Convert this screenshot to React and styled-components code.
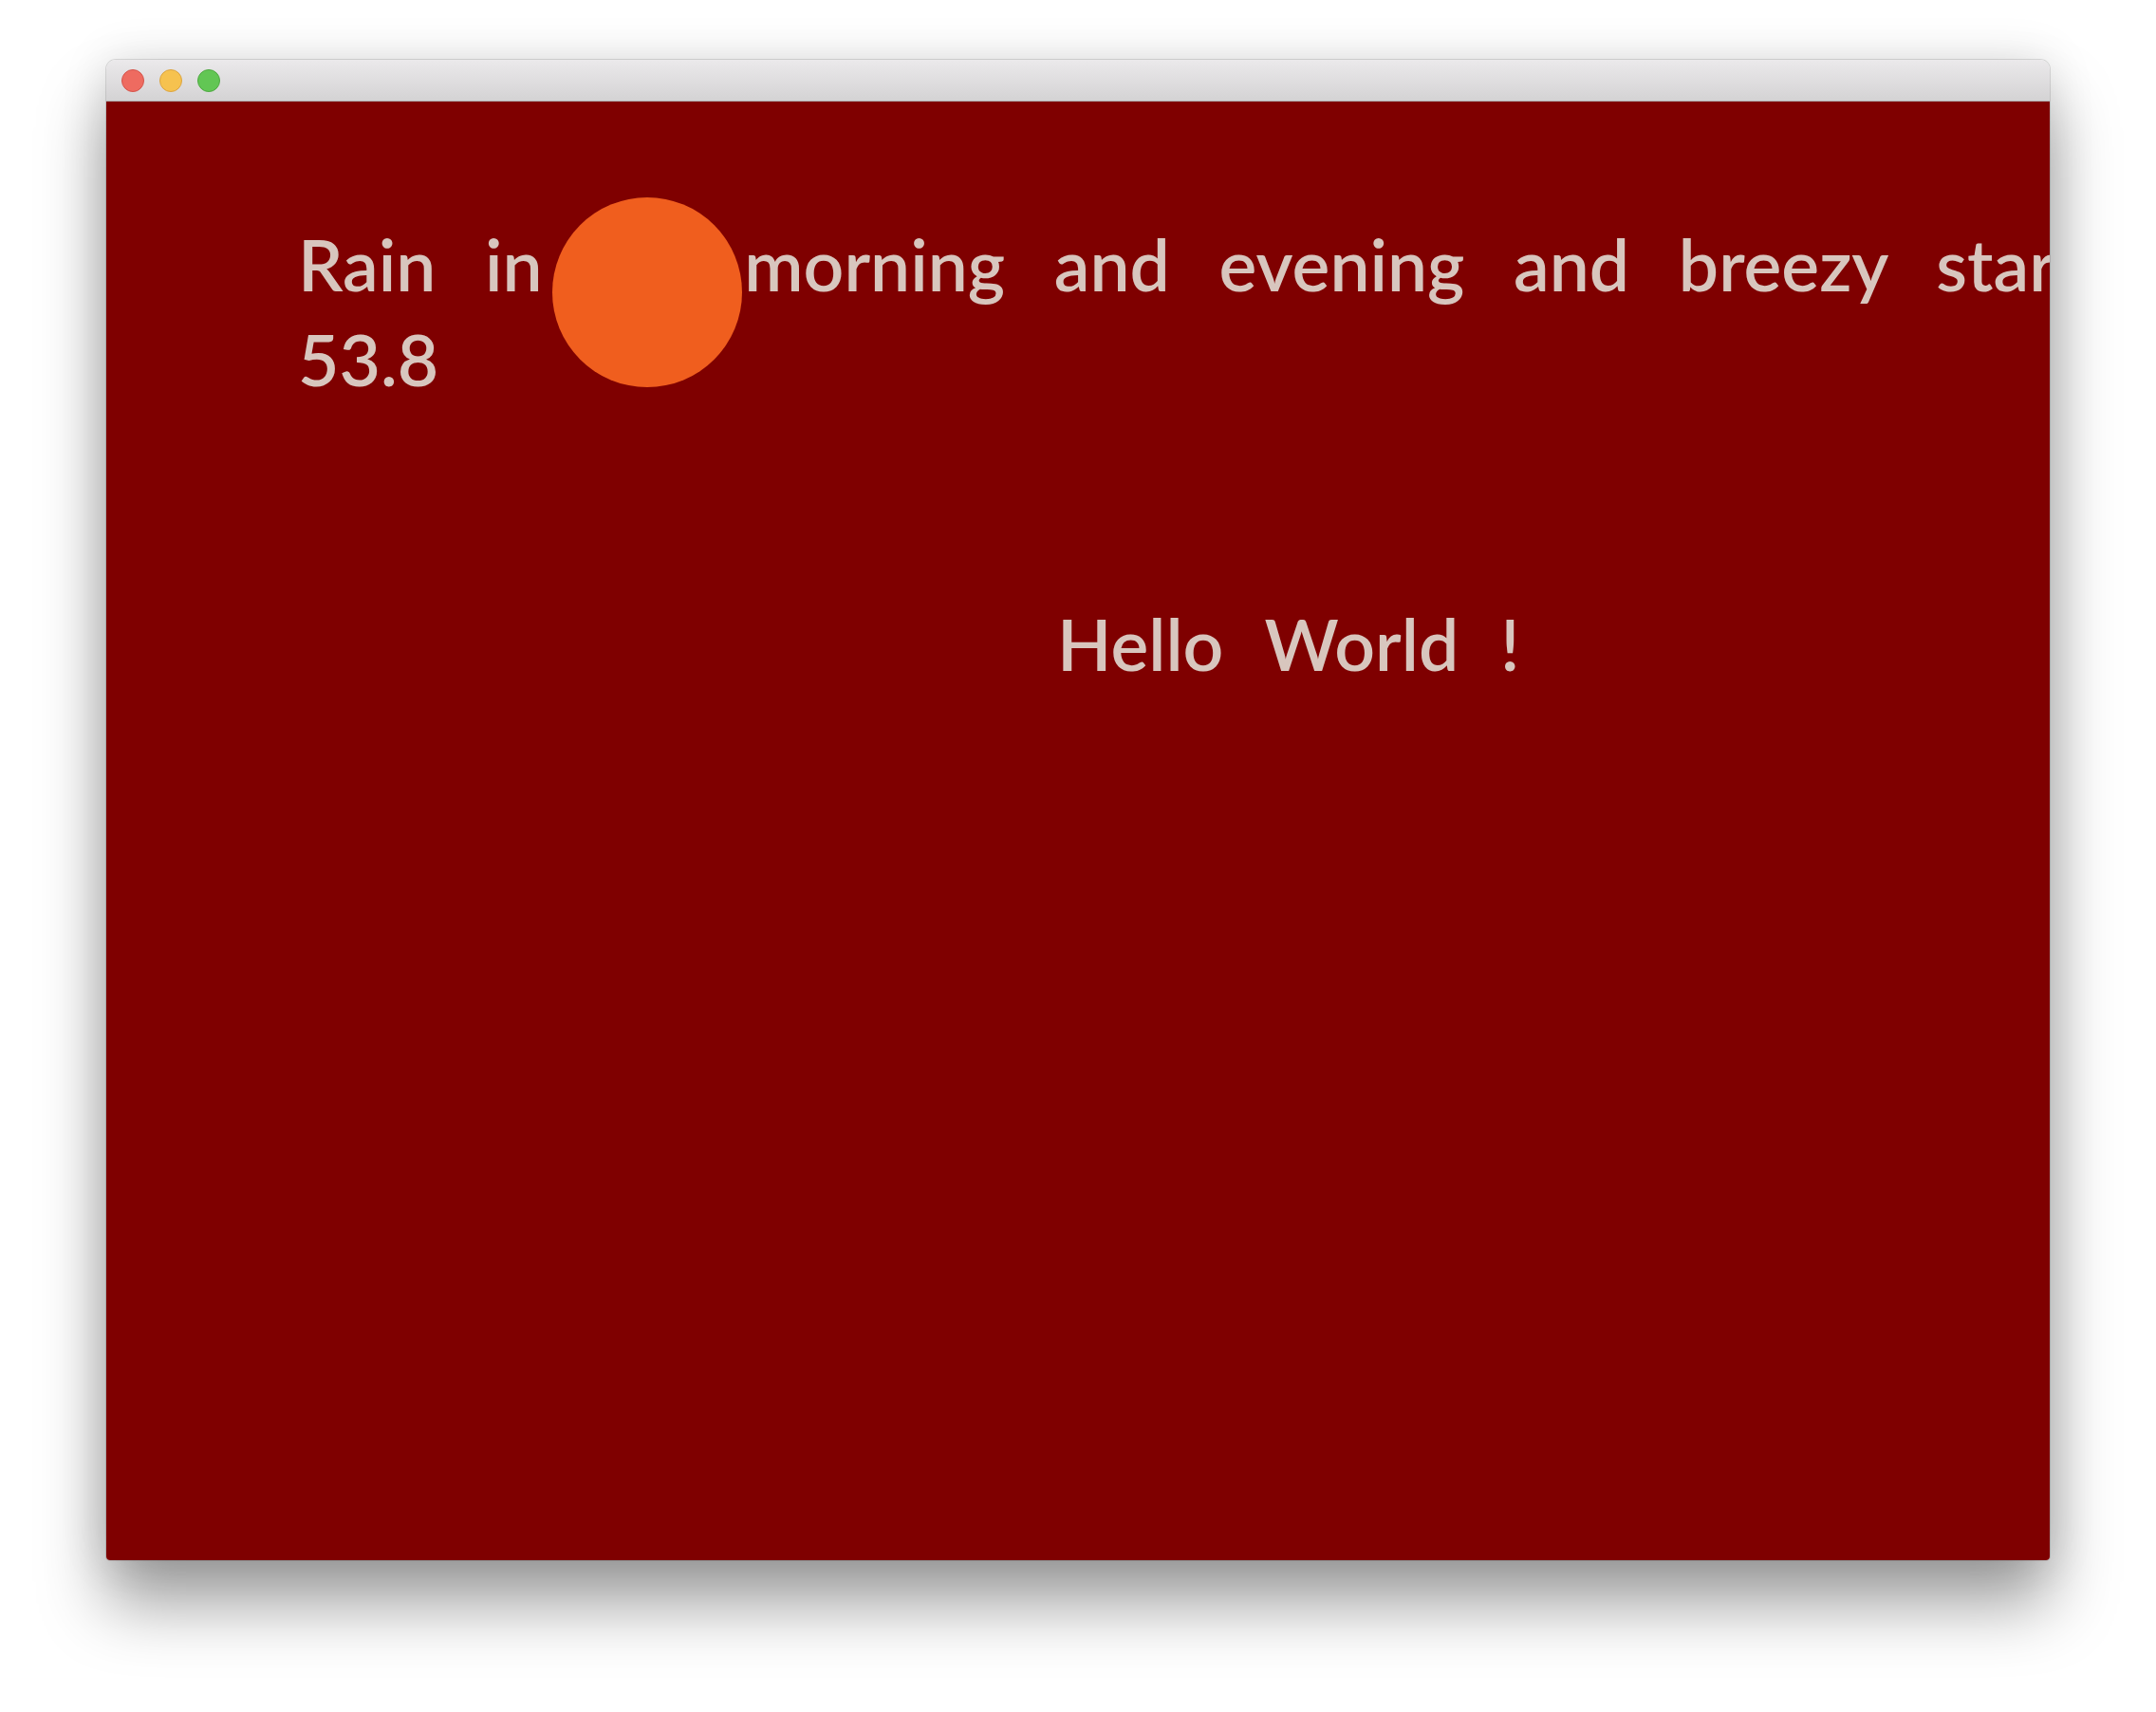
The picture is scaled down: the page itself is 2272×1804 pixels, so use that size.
import React from "react";
import styled, { createGlobalStyle } from "styled-components";

const GlobalStyle = createGlobalStyle`
  html, body {
    margin: 0;
    padding: 0;
    background: #ffffff;
  }
  body {
    font-family: "Lato", "Liberation Sans", sans-serif;
  }
`;

const Stage = styled.div`
  width: 2272px;
  height: 1804px;
  padding: 63px 112px 0 112px;
  box-sizing: border-box;
`;

const Window = styled.div`
  width: 2048px;
  display: flex;
  flex-direction: column;
  border-radius: 10px 10px 4px 4px;
  overflow: hidden;
  box-shadow: 0 0 0 1px rgba(0, 0, 0, 0.12), 0 46px 70px rgba(0, 0, 0, 0.38),
    0 0 50px rgba(0, 0, 0, 0.12);
`;

const TitleBar = styled.div`
  height: 44px;
  box-sizing: border-box;
  display: flex;
  align-items: center;
  gap: 16px;
  padding: 0 16px;
  background: linear-gradient(#ebe9eb, #d4d3d4);
  border-bottom: 1px solid #b1b0b1;
`;

const Light = styled.span`
  width: 24px;
  height: 24px;
  border-radius: 50%;
  box-sizing: border-box;
  background: ${(p) => p.$fill};
  border: 1px solid ${(p) => p.$edge};
`;

const Content = styled.div`
  position: relative;
  box-sizing: border-box;
  height: 1537px;
  background: #7f0000;
  overflow: hidden;
  color: #d8c6be;
  font-family: "Lato", "Liberation Sans", sans-serif;
  font-weight: 600;
  font-size: 75px;
  line-height: 100px;
  padding-top: 121px;
`;

const Forecast = styled.div`
  padding-left: 202px;
  white-space: nowrap;
  word-spacing: 33px;
`;

const Line = styled.div`
  height: 100px;
`;

const Greeting = styled.div`
  margin-top: 200px;
  padding-left: 1002px;
  white-space: nowrap;
  word-spacing: 25px;
`;

const Sun = styled.div`
  position: absolute;
  left: 470px;
  top: 101px;
  width: 200px;
  height: 200px;
  border-radius: 50%;
  background: #f05e1e;
`;

export default function App() {
  return (
    <>
      <GlobalStyle />
      <Stage>
        <Window>
          <TitleBar>
            <Light $fill="#ee6b60" $edge="#d4544b" />
            <Light $fill="#f6c24f" $edge="#dba441" />
            <Light $fill="#62c654" $edge="#4fa842" />
          </TitleBar>
          <Content>
            <Forecast>
              <Line>Rain in the morning and evening and breezy starting in the afternoon.</Line>
              <Line>53.8</Line>
            </Forecast>
            <Greeting>Hello World !</Greeting>
            <Sun />
          </Content>
        </Window>
      </Stage>
    </>
  );
}
